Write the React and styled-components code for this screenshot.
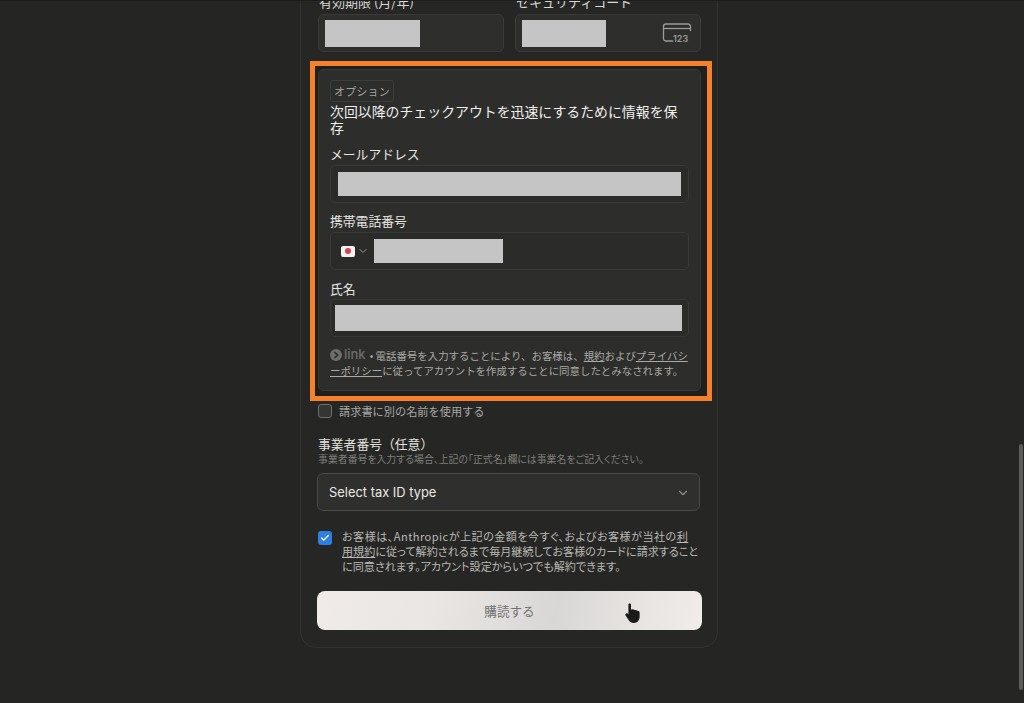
import React from "react";
import styled, { createGlobalStyle } from "styled-components";
import { ChevronDown, Check } from "lucide-react";

const GlobalStyle = createGlobalStyle`
  html, body {
    margin: 0;
    height: 703px;
    overflow: hidden;
    background: #252523;
    font-family: "Noto Sans CJK JP", "Noto Sans", sans-serif;
  }
`;

const Page = styled.div`
  position: relative;
  width: 1024px;
  height: 703px;
  overflow: hidden;
  background: #252523;
  display: flex;
  justify-content: center;
  border-top: 1px solid #1c1c1b;
  box-sizing: border-box;
`;

const Card = styled.div`
  width: 418px;
  height: 682px;
  margin-top: -35px;
  margin-left: -6px;
  box-sizing: border-box;
  padding: 0 16px 0 17px;
  background: #262624;
  border: 1px solid #32322f;
  border-radius: 16px;
  display: flex;
  flex-direction: column;
  flex-shrink: 0;
`;

const CardRow = styled.div`
  display: flex;
  gap: 11px;
  height: 85px;
  flex-shrink: 0;
`;

const CardField = styled.div`
  width: 186px;
  display: flex;
  flex-direction: column;
  justify-content: flex-end;
  gap: 3px;
`;

const TopLabel = styled.div`
  font-size: 13px;
  line-height: 18px;
  color: #d8d8d4;
  padding-left: 1px;
`;

const TopInput = styled.div`
  height: 38px;
  box-sizing: border-box;
  border: 1px solid #3a3a37;
  border-radius: 5px;
  background: #2e2e2c;
  display: flex;
  align-items: center;
  justify-content: space-between;
  padding: 0 8px 0 6px;
`;

const Redacted = styled.div`
  width: ${(p) => p.$w}px;
  height: ${(p) => p.$h}px;
  background: #c5c5c5;
  flex-shrink: 0;
`;

const Highlight = styled.div`
  margin: 9px -11px 0 -8px;
  height: 340px;
  flex-shrink: 0;
  box-sizing: border-box;
  border: 5px solid #f5812a;
  background: #1f1f1d;
  padding: 3px 6px 5px 3px;
`;

const Panel = styled.div`
  height: 100%;
  box-sizing: border-box;
  border: 1px solid #383835;
  border-radius: 5px;
  background: #2d2d2b;
  padding: 10px 11px 0;
`;

const Badge = styled.div`
  display: table;
  height: 22px;
  line-height: 20px;
  box-sizing: border-box;
  border: 1px solid #3c3c39;
  border-radius: 3px;
  padding: 0 3px;
  font-size: 11px;
  color: #a3a3a0;
  letter-spacing: 0.2px;
`;

const Heading = styled.div`
  margin-top: 1px;
  font-size: 13.9px;
  line-height: 16px;
  font-weight: 400;
  color: #efefeb;
`;

const PanelField = styled.div`
  margin-top: ${(p) => p.$top}px;
`;

const PanelLabel = styled.div`
  font-size: 12.8px;
  line-height: 18px;
  font-weight: 400;
  color: #e6e6e2;
`;

const PanelInput = styled.div`
  margin-top: ${(p) => p.$gap || 2}px;
  height: 38px;
  box-sizing: border-box;
  border: 1px solid #393936;
  border-radius: 5px;
  background: #2b2b29;
  display: flex;
  align-items: center;
  padding-left: ${(p) => p.$pad}px;
`;

const Flag = styled.div`
  width: 14px;
  height: 11px;
  border-radius: 2px;
  background: #f4f2f0;
  display: flex;
  align-items: center;
  justify-content: center;
  &::after {
    content: "";
    width: 6px;
    height: 6px;
    border-radius: 50%;
    background: #d8434f;
  }
`;

const FlagChevron = styled(ChevronDown)`
  margin: 0 5px 0 2px;
  color: #9a9a97;
`;

const Legal = styled.div`
  margin-top: 10px;
  font-size: 10.45px;
  line-height: 15px;
  color: #a9a9a5;
  white-space: nowrap;
  a {
    color: inherit;
    text-decoration: underline;
  }
`;

const LinkMark = styled.span`
  display: inline-flex;
  align-items: center;
  gap: 2px;
  font-family: "Inter", sans-serif;
  font-size: 13px;
  font-weight: 500;
  color: #6d6d6a;
  vertical-align: -1px;
  margin-right: 4px;
`;

const CheckRow = styled.div`
  display: flex;
  align-items: center;
  gap: 7px;
  margin-top: 3px;
  height: 14px;
  font-size: 11.2px;
  color: #a8a8a4;
`;

const EmptyBox = styled.div`
  width: 14px;
  height: 14px;
  box-sizing: border-box;
  border: 1px solid #6e6e6b;
  border-radius: 3px;
  background: #353533;
`;

const TaxSection = styled.div`
  margin-top: 17px;
`;

const TaxLabel = styled.div`
  font-size: 12.8px;
  line-height: 18px;
  font-weight: 400;
  color: #e2e2de;
`;

const TaxHint = styled.div`
  font-size: 9.9px;
  line-height: 13px;
  color: #7f7f7b;
  font-feature-settings: "palt";
`;

const SelectBox = styled.div`
  margin: 7px 1px 0 -1px;
  height: 38px;
  box-sizing: border-box;
  border: 1px solid #4a4a47;
  border-radius: 6px;
  background: #2f2f2d;
  display: flex;
  align-items: center;
  justify-content: space-between;
  padding: 1px 9px 0 11px;
  font-family: "Inter", sans-serif;
  font-size: 12.9px;
  color: #e8e8e4;
  svg {
    color: #8e8e8a;
  }
`;

const TermsRow = styled.div`
  display: flex;
  gap: 10px;
  margin-top: 18px;
`;

const BlueBox = styled.div`
  width: 14px;
  height: 14px;
  margin-top: 2px;
  border-radius: 3px;
  background: #2f7fe0;
  color: #fff;
  display: flex;
  align-items: center;
  justify-content: center;
  flex-shrink: 0;
`;

const TermsText = styled.div`
  font-size: 11.1px;
  line-height: 15px;
  color: #b9b9b4;
  white-space: nowrap;
  font-feature-settings: "palt";
  a {
    color: inherit;
    text-decoration: underline;
  }
`;

const TermsFirstLine = styled.span`
  letter-spacing: 0.45px;
`;

const SubmitButton = styled.button`
  margin: 17px 0 0 -1px;
  width: 385px;
  height: 39px;
  flex-shrink: 0;
  border: none;
  border-radius: 8px;
  background: linear-gradient(100deg, #f0ebe8 0%, #e9e6e4 30%, #d9d7d5 62%, #e8e5e3 85%, #efecea 100%);
  font-family: inherit;
  font-size: 12.6px;
  color: #6f6f6d;
`;

const Cursor = styled.svg`
  position: absolute;
  left: 625px;
  top: 602px;
`;

const ScrollThumb = styled.div`
  position: absolute;
  right: 1px;
  top: 443px;
  width: 4px;
  height: 246px;
  border-radius: 2px;
  background: #5c5c59;
`;

const CardIcon = () => (
  <svg width="30" height="22" viewBox="0 0 30 22" fill="none">
    <path d="M11 19H4a2.5 2.5 0 0 1-2.5-2.5v-12A2.5 2.5 0 0 1 4 2h22a2.5 2.5 0 0 1 2.5 2.5V9" stroke="#9b9b97" strokeWidth="1.3" />
    <path d="M1.5 6.5h27" stroke="#9b9b97" strokeWidth="1.3" />
    <text x="11" y="20" fontFamily="Inter, sans-serif" fontSize="9" fontWeight="600" fill="#9b9b97">123</text>
  </svg>
);

const App = () => {
  return (
    <Page>
      <GlobalStyle />
      <Card>
        <CardRow>
          <CardField>
            <TopLabel>有効期限 (月/年)</TopLabel>
            <TopInput>
              <Redacted $w={95} $h={27} />
            </TopInput>
          </CardField>
          <CardField>
            <TopLabel>セキュリティコード</TopLabel>
            <TopInput>
              <Redacted $w={84} $h={27} />
              <CardIcon />
            </TopInput>
          </CardField>
        </CardRow>

        <Highlight>
          <Panel>
            <Badge>オプション</Badge>
            <Heading>次回以降のチェックアウトを迅速にするために情報を保存</Heading>
            <PanelField $top={10}>
              <PanelLabel>メールアドレス</PanelLabel>
              <PanelInput $pad={7}>
                <Redacted $w={343} $h={24} />
              </PanelInput>
            </PanelField>
            <PanelField $top={9}>
              <PanelLabel>携帯電話番号</PanelLabel>
              <PanelInput $pad={10}>
                <Flag />
                <FlagChevron size={12} />
                <Redacted $w={129} $h={24} />
              </PanelInput>
            </PanelField>
            <PanelField $top={10}>
              <PanelLabel>氏名</PanelLabel>
              <PanelInput $pad={4} $gap={1}>
                <Redacted $w={347} $h={26} />
              </PanelInput>
            </PanelField>
            <Legal>
              <LinkMark>
                <svg width="12" height="12" viewBox="0 0 12 12">
                  <circle cx="6" cy="6" r="6" fill="#6d6d6a" />
                  <path d="M4.6 3.2 7.6 6l-3 2.8" fill="none" stroke="#2d2d2b" strokeWidth="1.6" />
                </svg>
                link
              </LinkMark>
              • 電話番号を入力することにより、お客様は、<a>規約</a>および<a>プライバシ</a>
              <br />
              <a>ーポリシー</a>に従ってアカウントを作成することに同意したとみなされます。
            </Legal>
          </Panel>
        </Highlight>

        <CheckRow>
          <EmptyBox />
          請求書に別の名前を使用する
        </CheckRow>

        <TaxSection>
          <TaxLabel>事業者番号（任意）</TaxLabel>
          <TaxHint>事業者番号を入力する場合、上記の「正式名」欄には事業名をご記入ください。</TaxHint>
          <SelectBox>
            Select tax ID type
            <ChevronDown size={14} />
          </SelectBox>
        </TaxSection>

        <TermsRow>
          <BlueBox>
            <Check size={10} strokeWidth={3} />
          </BlueBox>
          <TermsText>
            <TermsFirstLine>
              お客様は、Anthropicが上記の金額を今すぐ、およびお客様が当社の<a>利</a>
            </TermsFirstLine>
            <br />
            <a>用規約</a>に従って解約されるまで毎月継続してお客様のカードに請求すること
            <br />
            に同意されます。アカウント設定からいつでも解約できます。
          </TermsText>
        </TermsRow>

        <SubmitButton>購読する</SubmitButton>
      </Card>

      <Cursor width="16" height="21" viewBox="0 0 16 21">
        <path
          d="M3.4 1.6c0-1.6 2.6-1.6 2.6 0v5.2c1.6-.8 3 -.4 3.4.3 1.2-.5 2.4 0 2.7.7 1.3-.3 2.5.4 2.5 1.8v4.4c0 3.2-2.3 6-5.6 6-2.8 0-4.2-1-5.4-3L.6 12.4c-.8-1.4 1-2.8 2.2-1.6l.6.7z"
          fill="#1a1a19"
        />
      </Cursor>
      <ScrollThumb />
    </Page>
  );
};

export default App;
